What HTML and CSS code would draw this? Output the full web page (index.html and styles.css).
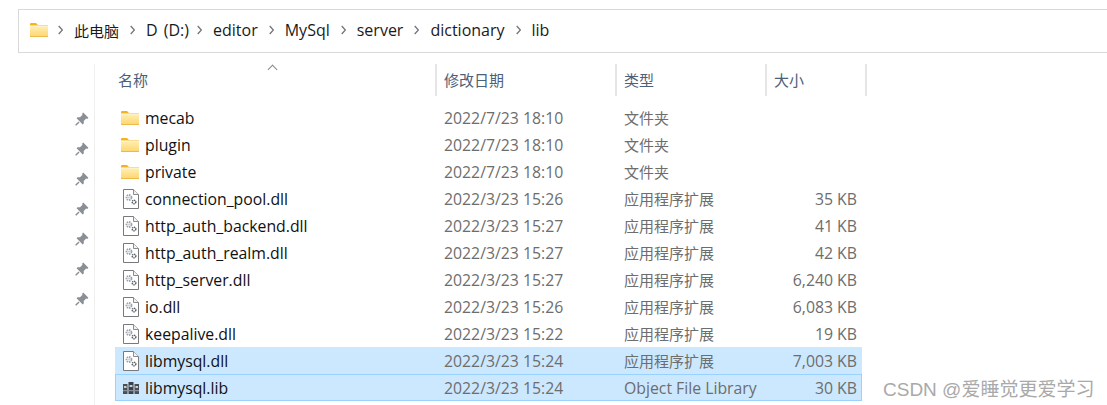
FILE: index.html
```html
<!DOCTYPE html>
<html lang="zh">
<head>
<meta charset="utf-8">
<title>lib</title>
<link rel="stylesheet" href="styles.css">
</head>
<body>
<svg class="defs" width="0" height="0" aria-hidden="true">
  <defs>
    <linearGradient id="fg" x1="0" y1="0" x2="0" y2="1">
      <stop offset="0" stop-color="#fff0b8"/>
      <stop offset="1" stop-color="#fdd56b"/>
    </linearGradient>
    <symbol id="folder" viewBox="0 0 18 14">
      <path d="M0 1.2 Q0 0 1 0 H6 L8 2 H18 V4 H0Z" fill="#f5b21d"/>
      <rect x="0" y="2.6" width="18" height="11.4" fill="url(#fg)"/>
      <rect x="0" y="13" width="18" height="1" fill="#eeb84a"/>
      <rect x="0" y="2.6" width="18" height="1" fill="#fff6d6"/>
    </symbol>
    <symbol id="dll" viewBox="0 0 16 20">
      <path d="M.5.5H10.5L15.500 5.500V19.500H.5Z" fill="#fff" stroke="#77797d"/>
      <path d="M10.500.5V5.500H15.500" fill="#f2f2f2" stroke="#8a8c90"/>
      <circle cx="6" cy="8.500" r="2.500" fill="none" stroke="#9aa3ad" stroke-width="1.800" stroke-dasharray="1.500 .8"/>
      <circle cx="6" cy="8.500" r="1" fill="#c5ccd4"/>
      <circle cx="11" cy="13" r="1.800" fill="none" stroke="#5b6167" stroke-width="1.500" stroke-dasharray="1.300 .6"/>
    </symbol>
    <symbol id="lib" viewBox="0 0 16 14">
      <rect x="0" y="3" width="4.500" height="10" fill="#4a4f55"/>
      <rect x="5.500" y="1" width="5" height="12" fill="#3c4147"/>
      <rect x="11.500" y="3" width="4.500" height="10" fill="#4a4f55"/>
      <rect x="1" y="5" width="2.500" height="2" fill="#c9ced3"/>
      <rect x="6.500" y="4" width="3" height="2" fill="#c9ced3"/>
      <rect x="12.500" y="5" width="2.500" height="2" fill="#c9ced3"/>
      <rect x="0" y="9" width="16" height="1.200" fill="#8b9096"/>
    </symbol>
    <symbol id="pin" viewBox="0 0 14 14">
      <path d="M8.200.6 13.400 5.800 12.300 6.900 11.200 6.500 8.700 9 8.800 11.500 7.700 12.400 1.600 6.300 2.500 5.200 5 5.300 7.500 2.800 7.100 1.700Z" fill="#8a8f96"/>
      <path d="M4 9.900.7 13.300" stroke="#8a8f96" stroke-width="1.400"/>
    </symbol>
    <symbol id="chev" viewBox="0 0 5 10">
      <path d="M.7 1 4.400 5 .7 9" fill="none" stroke="#70757b" stroke-width="1.300"/>
    </symbol>
  </defs>
</svg>

<nav class="address">
  <svg class="addr-folder"><use href="#folder"/></svg>
  <svg class="chev"><use href="#chev"/></svg><span class="crumb-cjk">此电脑</span>
  <svg class="chev"><use href="#chev"/></svg><span class="crumb-drive">D (D:)</span>
  <svg class="chev"><use href="#chev"/></svg><span>editor</span>
  <svg class="chev"><use href="#chev"/></svg><span>MySql</span>
  <svg class="chev"><use href="#chev"/></svg><span>server</span>
  <svg class="chev"><use href="#chev"/></svg><span>dictionary</span>
  <svg class="chev"><use href="#chev"/></svg><span>lib</span>
</nav>

<main class="explorer">
  <aside class="pins">
    <svg class="pin"><use href="#pin"/></svg>
    <svg class="pin"><use href="#pin"/></svg>
    <svg class="pin"><use href="#pin"/></svg>
    <svg class="pin"><use href="#pin"/></svg>
    <svg class="pin"><use href="#pin"/></svg>
    <svg class="pin"><use href="#pin"/></svg>
    <svg class="pin"><use href="#pin"/></svg>
  </aside>
  <section class="list">
    <header class="head">
      <div class="hcell hname">名称<span class="sort"></span></div>
      <div class="hcell">修改日期</div>
      <div class="hcell">类型</div>
      <div class="hcell">大小</div>
    </header>
    <div class="rows">
      <div class="row"><svg class="ic-folder"><use href="#folder"/></svg><span class="name">mecab</span><span class="cell">2022/7/23 18:10</span><span class="cell cjk">文件夹</span><span class="size"></span></div>
      <div class="row"><svg class="ic-folder"><use href="#folder"/></svg><span class="name">plugin</span><span class="cell">2022/7/23 18:10</span><span class="cell cjk">文件夹</span><span class="size"></span></div>
      <div class="row"><svg class="ic-folder"><use href="#folder"/></svg><span class="name">private</span><span class="cell">2022/7/23 18:10</span><span class="cell cjk">文件夹</span><span class="size"></span></div>
      <div class="row"><svg class="ic-file"><use href="#dll"/></svg><span class="name">connection_pool.dll</span><span class="cell">2022/3/23 15:26</span><span class="cell cjk">应用程序扩展</span><span class="size">35 KB</span></div>
      <div class="row"><svg class="ic-file"><use href="#dll"/></svg><span class="name">http_auth_backend.dll</span><span class="cell">2022/3/23 15:27</span><span class="cell cjk">应用程序扩展</span><span class="size">41 KB</span></div>
      <div class="row"><svg class="ic-file"><use href="#dll"/></svg><span class="name">http_auth_realm.dll</span><span class="cell">2022/3/23 15:27</span><span class="cell cjk">应用程序扩展</span><span class="size">42 KB</span></div>
      <div class="row"><svg class="ic-file"><use href="#dll"/></svg><span class="name">http_server.dll</span><span class="cell">2022/3/23 15:27</span><span class="cell cjk">应用程序扩展</span><span class="size">6,240 KB</span></div>
      <div class="row"><svg class="ic-file"><use href="#dll"/></svg><span class="name">io.dll</span><span class="cell">2022/3/23 15:26</span><span class="cell cjk">应用程序扩展</span><span class="size">6,083 KB</span></div>
      <div class="row"><svg class="ic-file"><use href="#dll"/></svg><span class="name">keepalive.dll</span><span class="cell">2022/3/23 15:22</span><span class="cell cjk">应用程序扩展</span><span class="size">19 KB</span></div>
      <div class="row selected"><svg class="ic-file"><use href="#dll"/></svg><span class="name">libmysql.dll</span><span class="cell">2022/3/23 15:24</span><span class="cell cjk">应用程序扩展</span><span class="size">7,003 KB</span></div>
      <div class="row selected focus"><svg class="ic-lib"><use href="#lib"/></svg><span class="name">libmysql.lib</span><span class="cell">2022/3/23 15:24</span><span class="cell">Object File Library</span><span class="size">30 KB</span></div>
    </div>
  </section>
</main>
<div class="watermark">CSDN @爱睡觉更爱学习</div>
</body>
</html>
```
FILE: styles.css
```css
* { box-sizing: border-box; }
html, body { margin: 0; padding: 0; }
body {
  width: 1107px;
  height: 405px;
  overflow: hidden;
  background: #fff;
  position: relative;
  font-family: "Open Sans", "Noto Sans CJK SC", sans-serif;
  font-size: 15px;
  color: #1a1a1a;
}
.defs { position: absolute; }
.address {
  margin: 9px 0 0 18px;
  width: 1100px;
  height: 44px;
  border: 1px solid #d9d9d9;
  display: flex;
  align-items: center;
  padding: 0 0 2px 11px;
  font-size: 16px;
}
.addr-folder { width: 18px; height: 14px; margin-right: 10px; }
.chev { width: 5px; height: 10px; margin-right: 11px; flex: none; }
.address span { margin-right: 11px; }
.address .crumb-cjk { font-size: 15px; }
.address .crumb-drive { word-spacing: 2px; margin-right: 8px; }
.explorer {
  display: flex;
  margin-top: 11px;
}
.pins {
  width: 95px;
  padding: 48px 0 0 75px;
  display: flex;
  flex-direction: column;
  gap: 16px;
  border-right: 1px solid #efefef;
  height: 341px;
}
.pin { width: 14px; height: 14px; display: block; }
.list { width: 772px; margin-left: 1px; }
.head {
  display: grid;
  grid-template-columns: 341px 180px 150px 100px;
  height: 32px;
}
.hcell {
  border-right: 2px solid #e5e5e5;
  padding: 0 0 2px 7px;
  display: flex;
  align-items: center;
  color: #4c607a;
  font-size: 15px;
  position: relative;
}
.hname { padding-left: 22px; }
.sort {
  position: absolute;
  left: 173px;
  top: 2px;
  width: 7px;
  height: 7px;
  border-left: 1px solid #8a8a8a;
  border-top: 1px solid #8a8a8a;
  transform: rotate(45deg);
}
.rows { padding: 8px 0 0 19px; }
.row {
  width: 747px;
  height: 27px;
  display: grid;
  grid-template-columns: 29px 299px 180px 130px 107px;
  align-items: center;
  border: 1px solid transparent;
}
.row > svg { justify-self: center; }
.selected { background: #cce8ff; }
.focus { border-color: #99d1ff; }
.ic-folder { width: 18px; height: 14px; margin-left: -1px; }
.ic-file { width: 16px; height: 20px; }
.ic-lib { width: 16px; height: 14px; }
.name { color: #111; white-space: nowrap; font-size: 15.800px; line-height: 22px; }
.cell { color: #6d6d6d; font-size: 15.800px; line-height: 22px; white-space: nowrap; }
.cjk { font-size: 15px; }
.size { color: #6d6d6d; text-align: right; font-size: 15.800px; line-height: 22px; padding-right: 4px; }
.watermark {
  position: absolute;
  left: 883px;
  top: 374px;
  font-family: "Liberation Sans", "Noto Sans CJK SC", sans-serif;
  font-size: 19px;
  color: #a9a9a9;
  white-space: nowrap;
}
```
